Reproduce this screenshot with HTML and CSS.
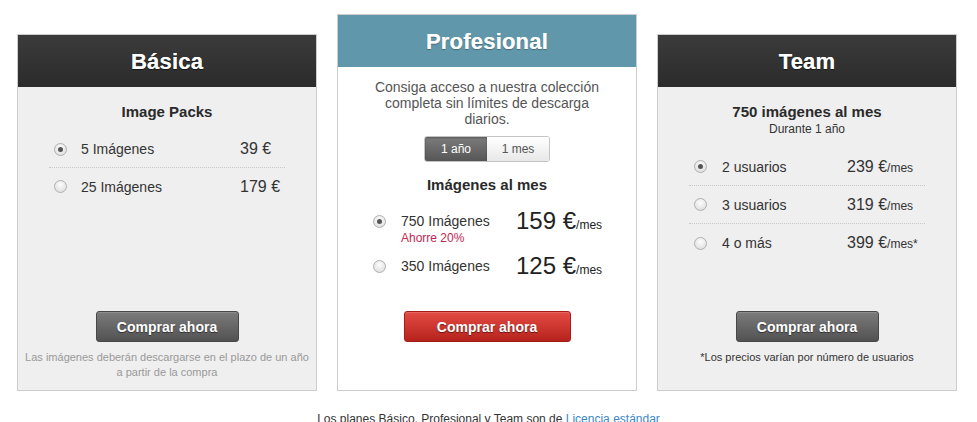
FILE: index.html
```html
<!DOCTYPE html>
<html lang="es">
<head>
    <meta charset="UTF-8" />
    <meta name="viewport" content="width=device-width, initial-scale=1.0" />
    <title>Planes</title>
    <link rel="stylesheet" href="styles.css">
</head>
<body>
    <div class="plans">
        <!-- Básica -->
        <div class="plan">
            <div class="plan-head">Básica</div>
            <div class="plan-body">
                <div class="plan-title">Image Packs</div>
                <ul class="options">
                    <li class="option"><span class="radio checked"></span><span class="opt-label">5 Imágenes</span><span class="opt-price">39 €</span></li>
                    <li class="option"><span class="radio"></span><span class="opt-label">25 Imágenes</span><span class="opt-price">179 €</span></li>
                </ul>
            </div>
            <div class="plan-foot">
                <button class="btn">Comprar ahora</button>
                <p class="note muted">Las imágenes deberán descargarse en el plazo de un año a partir de la compra</p>
            </div>
        </div>

        <!-- Profesional -->
        <div class="plan plan-featured">
            <div class="plan-head">Profesional</div>
            <div class="plan-body">
                <p class="plan-desc">Consiga acceso a nuestra colección completa sin límites de descarga diarios.</p>
                <div class="toggle">
                    <span class="toggle-item active">1 año</span>
                    <span class="toggle-item">1 mes</span>
                </div>
                <div class="plan-title">Imágenes al mes</div>
                <ul class="big-options">
                    <li class="big-option">
                        <span class="radio checked"></span>
                        <span class="big-label">750 Imágenes<small>Ahorre 20%</small></span>
                        <span class="big-price">159 €<small>/mes</small></span>
                    </li>
                    <li class="big-option">
                        <span class="radio"></span>
                        <span class="big-label">350 Imágenes</span>
                        <span class="big-price">125 €<small>/mes</small></span>
                    </li>
                </ul>
            </div>
            <div class="plan-foot">
                <button class="btn btn-red">Comprar ahora</button>
            </div>
        </div>

        <!-- Team -->
        <div class="plan">
            <div class="plan-head">Team</div>
            <div class="plan-body">
                <div class="plan-title">750 imágenes al mes</div>
                <div class="plan-sub">Durante 1 año</div>
                <ul class="options options-team">
                    <li class="option"><span class="radio checked"></span><span class="opt-label">2 usuarios</span><span class="opt-price">239 €<small>/mes</small></span></li>
                    <li class="option"><span class="radio"></span><span class="opt-label">3 usuarios</span><span class="opt-price">319 €<small>/mes</small></span></li>
                    <li class="option"><span class="radio"></span><span class="opt-label">4 o más</span><span class="opt-price">399 €<small>/mes*</small></span></li>
                </ul>
            </div>
            <div class="plan-foot">
                <button class="btn">Comprar ahora</button>
                <p class="note">*Los precios varían por número de usuarios</p>
            </div>
        </div>
    </div>

    <p class="license">Los planes Básico, Profesional y Team son de <a href="#">Licencia estándar</a></p>
</body>
</html>
```

FILE: styles.css
```css
/* Base */
* {
    box-sizing: border-box;
}

body {
    font-family: 'Liberation Sans', Arial, sans-serif;
    background: #fff;
    color: #333;
    margin: 0;
    padding: 14px 0 0;
}

/* Plan cards */
.plans {
    display: flex;
    align-items: flex-end;
    gap: 20px;
    padding: 0 17px;
}

.plan {
    width: 300px;
    height: 357px;
    border: 1px solid #ccc;
    background: #efefef;
    display: flex;
    flex-direction: column;
}

.plan-featured {
    height: 377px;
    background: #fff;
}

.plan-head {
    height: 52px;
    line-height: 53px;
    text-align: center;
    font-size: 22px;
    font-weight: bold;
    color: #fff;
    background: linear-gradient(#3b3b3b, #2b2b2b);
    text-shadow: 0 1px 1px rgba(0, 0, 0, 0.6), 0 0 0.6px #fff;
    letter-spacing: 0.2px;
}

.plan-featured .plan-head {
    background: #6097ab;
    text-shadow: 0 1px 1px rgba(0, 0, 0, 0.3), 0 0 0.6px #fff;
}

.plan-body {
    flex: 1;
    padding-top: 16px;
}

.plan-featured .plan-body {
    padding-top: 12px;
}

.plan-title {
    text-align: center;
    font-size: 15px;
    line-height: 18px;
    font-weight: bold;
    color: #2a2a2a;
}

.plan-sub {
    text-align: center;
    font-size: 12px;
    line-height: 17px;
    color: #333;
}

/* Option rows */
.options {
    list-style: none;
    margin: 10px 31px 0 31px;
    padding: 0;
}

.option {
    display: grid;
    grid-template-columns: 13px 1fr 45px;
    column-gap: 14px;
    align-items: center;
    height: 37px;
    padding-left: 5px;
    font-size: 14px;
    border-bottom: 1px dotted #c8c8c8;
}

.option:last-child {
    border-bottom: none;
}

.opt-price {
    font-size: 16px;
    white-space: nowrap;
}

.opt-price small {
    font-size: 12px;
}

.options-team .option {
    grid-template-columns: 13px 1fr 78px;
    column-gap: 15px;
    height: 38px;
}

/* Radios */
.radio {
    width: 13px;
    height: 13px;
    border-radius: 50%;
    border: 1px solid #b0b0b0;
    background: radial-gradient(circle at 50% 35%, #fdfdfd, #d8d8d8);
    position: relative;
}

.radio.checked::after {
    content: "";
    position: absolute;
    top: 3px;
    left: 3px;
    width: 5px;
    height: 5px;
    border-radius: 50%;
    background: #555;
}

/* Profesional */
.plan-desc {
    margin: 0 auto;
    width: 244px;
    text-align: center;
    font-size: 14px;
    line-height: 16px;
    color: #555;
}

.toggle {
    display: flex;
    width: 126px;
    height: 26px;
    margin: 9px auto 14px;
    border: 1px solid #c4c4c4;
    border-radius: 3px;
    overflow: hidden;
}

.toggle-item {
    flex: 1;
    text-align: center;
    font-size: 12px;
    line-height: 24px;
    color: #555;
    background: linear-gradient(#fff, #e8e8e8);
}

.toggle-item.active {
    color: #fff;
    background: linear-gradient(#7c7c7c, #565656);
    box-shadow: inset 0 1px 2px rgba(0, 0, 0, 0.3);
}

.big-options {
    list-style: none;
    margin: 15px 0 0;
    padding: 0 0 0 35px;
}

.big-option {
    display: grid;
    grid-template-columns: 13px 100px auto;
    column-gap: 15px;
    align-items: start;
    margin-bottom: 8px;
}

.big-option .radio {
    margin-top: 6px;
}

.big-label {
    margin-top: 4px;
    font-size: 14px;
    line-height: 17px;
    white-space: nowrap;
}

.big-label small {
    display: block;
    font-size: 12px;
    line-height: 16px;
    color: #c4264f;
}

.big-price {
    font-size: 24px;
    line-height: 24px;
    color: #222;
    white-space: nowrap;
}

.big-price small {
    font-size: 12px;
}

/* Footer of each card */
.plan-foot {
    height: 79px;
    text-align: center;
}

.btn {
    display: block;
    margin: 0 auto;
    width: 143px;
    height: 31px;
    padding: 0;
    border: 1px solid #474747;
    border-radius: 3px;
    background: linear-gradient(#7b7b7b, #525252);
    color: #fff;
    font-family: inherit;
    font-size: 14px;
    font-weight: bold;
    text-shadow: 0 1px 1px rgba(0, 0, 0, 0.5);
    box-shadow: inset 0 1px 0 rgba(255, 255, 255, 0.15);
    cursor: pointer;
}

.btn-red {
    width: 167px;
    border-color: #a31d19;
    background: linear-gradient(#e34c44, #b8221d);
}

.note {
    margin: 8px 6px 0;
    font-size: 11px;
    line-height: 15px;
    color: #333;
}

.note.muted {
    color: #999;
}

/* License line */
.license {
    margin: 21px 0 0;
    text-align: center;
    font-size: 12px;
    line-height: 15px;
    color: #333;
}

.license a {
    color: #3b87c6;
    text-decoration: none;
}
```
